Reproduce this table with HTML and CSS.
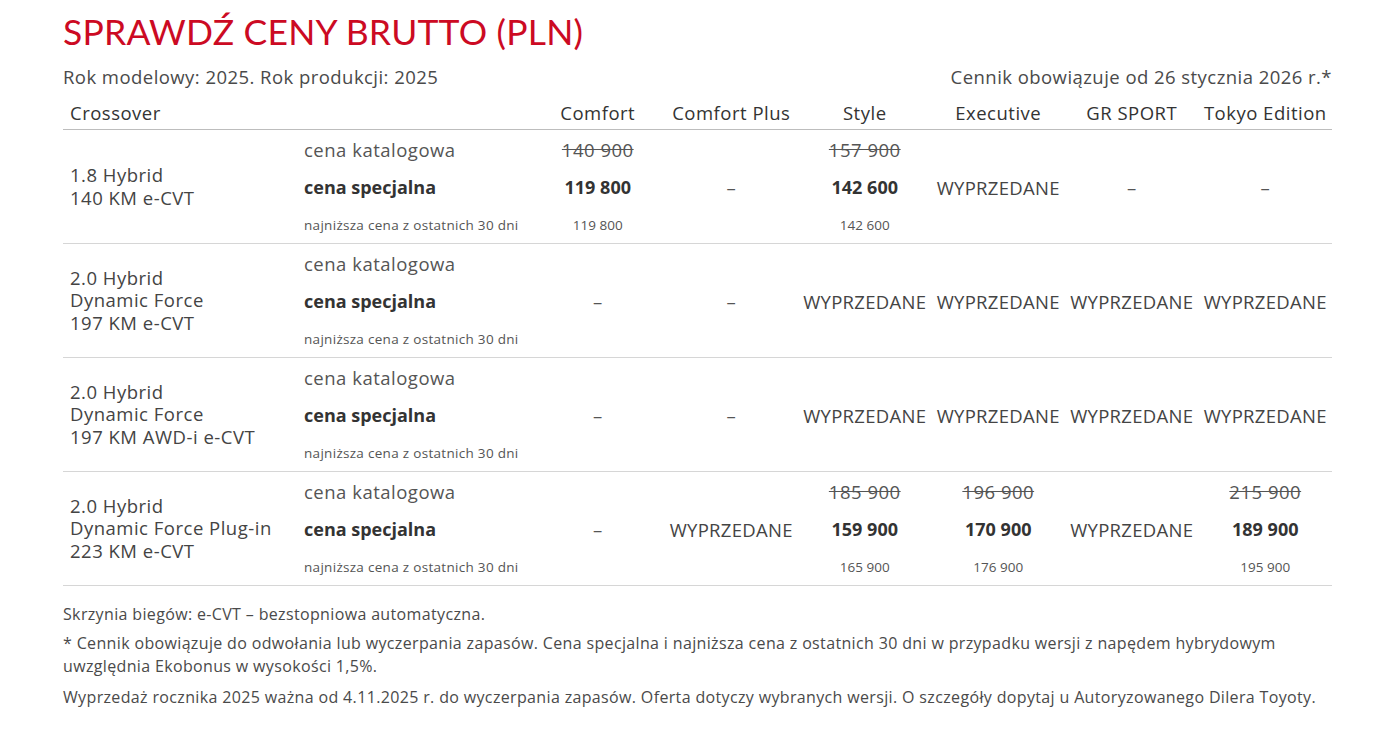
FILE: index.html
```html
<!DOCTYPE html>
<html lang="pl">
<head>
<meta charset="utf-8">
<title>Sprawdź ceny brutto</title>
<link rel="stylesheet" href="styles.css">
</head>
<body>
<div class="page">
  <h1 class="title">SPRAWDŹ CENY BRUTTO (PLN)</h1>
  <div class="meta">
    <span>Rok modelowy: 2025. Rok produkcji: 2025</span>
    <span>Cennik obowiązuje od 26 stycznia 2026 r.*</span>
  </div>
  <table class="prices">
    <colgroup>
      <col class="c-model"><col class="c-label">
      <col class="c-val"><col class="c-val"><col class="c-val"><col class="c-val"><col class="c-val"><col class="c-val">
    </colgroup>
    <thead>
      <tr>
        <th class="model">Crossover</th>
        <th></th>
        <th>Comfort</th>
        <th>Comfort Plus</th>
        <th>Style</th>
        <th>Executive</th>
        <th>GR SPORT</th>
        <th>Tokyo Edition</th>
      </tr>
    </thead>
    <tbody>
      <tr class="r1">
        <td class="model" rowspan="3">1.8 Hybrid<br>140 KM e-CVT</td>
        <td class="label">cena katalogowa</td>
        <td class="old">140 900</td><td></td><td class="old">157 900</td><td></td><td></td><td></td>
      </tr>
      <tr class="r2">
        <td class="label special">cena specjalna</td>
        <td class="price">119 800</td><td class="dash">–</td><td class="price">142 600</td><td class="sold">WYPRZEDANE</td><td class="dash">–</td><td class="dash">–</td>
      </tr>
      <tr class="r3">
        <td class="label small">najniższa cena z ostatnich 30 dni</td>
        <td class="low">119 800</td><td></td><td class="low">142 600</td><td></td><td></td><td></td>
      </tr>
    </tbody>
    <tbody>
      <tr class="r1">
        <td class="model" rowspan="3">2.0 Hybrid<br>Dynamic Force<br>197 KM e-CVT</td>
        <td class="label">cena katalogowa</td>
        <td></td><td></td><td></td><td></td><td></td><td></td>
      </tr>
      <tr class="r2">
        <td class="label special">cena specjalna</td>
        <td class="dash">–</td><td class="dash">–</td><td class="sold">WYPRZEDANE</td><td class="sold">WYPRZEDANE</td><td class="sold">WYPRZEDANE</td><td class="sold">WYPRZEDANE</td>
      </tr>
      <tr class="r3">
        <td class="label small">najniższa cena z ostatnich 30 dni</td>
        <td></td><td></td><td></td><td></td><td></td><td></td>
      </tr>
    </tbody>
    <tbody>
      <tr class="r1">
        <td class="model" rowspan="3">2.0 Hybrid<br>Dynamic Force<br>197 KM AWD-i e-CVT</td>
        <td class="label">cena katalogowa</td>
        <td></td><td></td><td></td><td></td><td></td><td></td>
      </tr>
      <tr class="r2">
        <td class="label special">cena specjalna</td>
        <td class="dash">–</td><td class="dash">–</td><td class="sold">WYPRZEDANE</td><td class="sold">WYPRZEDANE</td><td class="sold">WYPRZEDANE</td><td class="sold">WYPRZEDANE</td>
      </tr>
      <tr class="r3">
        <td class="label small">najniższa cena z ostatnich 30 dni</td>
        <td></td><td></td><td></td><td></td><td></td><td></td>
      </tr>
    </tbody>
    <tbody>
      <tr class="r1">
        <td class="model" rowspan="3">2.0 Hybrid<br>Dynamic Force Plug-in<br>223 KM e-CVT</td>
        <td class="label">cena katalogowa</td>
        <td></td><td></td><td class="old">185 900</td><td class="old">196 900</td><td></td><td class="old">215 900</td>
      </tr>
      <tr class="r2">
        <td class="label special">cena specjalna</td>
        <td class="dash">–</td><td class="sold">WYPRZEDANE</td><td class="price">159 900</td><td class="price">170 900</td><td class="sold">WYPRZEDANE</td><td class="price">189 900</td>
      </tr>
      <tr class="r3">
        <td class="label small">najniższa cena z ostatnich 30 dni</td>
        <td></td><td></td><td class="low">165 900</td><td class="low">176 900</td><td></td><td class="low">195 900</td>
      </tr>
    </tbody>
  </table>
  <div class="notes">
    <p>Skrzynia biegów: e-CVT – bezstopniowa automatyczna.</p>
    <p>* Cennik obowiązuje do odwołania lub wyczerpania zapasów. Cena specjalna i najniższa cena z ostatnich 30 dni w przypadku wersji z napędem hybrydowym uwzględnia Ekobonus w wysokości 1,5%.</p>
    <p>Wyprzedaż rocznika 2025 ważna od 4.11.2025 r. do wyczerpania zapasów. Oferta dotyczy wybranych wersji. O szczegóły dopytaj u Autoryzowanego Dilera Toyoty.</p>
  </div>
</div>
</body>
</html>
```

FILE: styles.css
```css
html, body {
  margin: 0;
  padding: 0;
  background: #ffffff;
}
body {
  font-family: "Open Sans", "Liberation Sans", sans-serif;
  color: #3a3a3a;
}
.page {
  width: 1269px;
  padding: 10px 0 0 63px;
}
.title {
  margin: 0;
  font-family: "Lato", "Liberation Sans", sans-serif;
  font-size: 35.5px;
  line-height: 44px;
  font-weight: 400;
  color: #cc0a23;
  letter-spacing: 0.2px;
}
.meta {
  display: flex;
  justify-content: space-between;
  margin-top: 11px;
  font-size: 18.5px;
  line-height: 24px;
  letter-spacing: 0.45px;
  color: #4a4a4a;
}
.prices {
  margin-top: 6px;
  width: 1269px;
  table-layout: fixed;
  border-collapse: collapse;
}
.c-model { width: 232px; }
.c-label { width: 236px; }
.c-val { width: 133.5px; }
.prices th {
  font-weight: 400;
  font-size: 18.5px;
  letter-spacing: 0.5px;
  line-height: 20px;
  height: 32px;
  padding: 2px 0 0;
  text-align: center;
  color: #333;
  border-bottom: 1px solid #bdbdbd;
  white-space: nowrap;
}
.prices th.model {
  text-align: left;
  padding-left: 7px;
}
.prices tbody {
  border-bottom: 1px solid #d6d6d6;
}
.prices td {
  padding: 0;
  text-align: center;
  font-size: 18.5px;
  letter-spacing: 0.5px;
  white-space: nowrap;
  color: #444;
}
.r1 td { height: 38px; }
.r2 td { height: 38px; }
.r3 td { height: 37px; }
.prices td.model {
  text-align: left;
  padding-left: 7px;
  line-height: 22.5px;
  color: #444;
  vertical-align: middle;
}
.prices td.label {
  text-align: left;
  padding-left: 9px;
  color: #555;
}
.prices td.special {
  font-size: 18px;
  letter-spacing: 0;
  font-weight: 700;
  color: #333;
}
.prices td.small {
  font-size: 13.5px;
  letter-spacing: 0.3px;
  color: #555;
}
.prices td.old {
  text-decoration: line-through;
  color: #555;
}
.prices td.price {
  font-size: 18px;
  letter-spacing: 0;
  font-weight: 700;
  color: #333;
}
.prices td.low {
  font-size: 13.5px;
  letter-spacing: 0;
  color: #555;
}
.prices td.sold {
  letter-spacing: 0.3px;
  color: #444;
}
.prices td.dash {
  color: #555;
}
.notes {
  margin-top: 17px;
  font-size: 16px;
  letter-spacing: 0.35px;
  line-height: 23px;
  color: #4a4a4a;
}
.notes p {
  margin: 0 0 8px;
}
.notes p:first-child {
  margin-bottom: 6px;
}
```
